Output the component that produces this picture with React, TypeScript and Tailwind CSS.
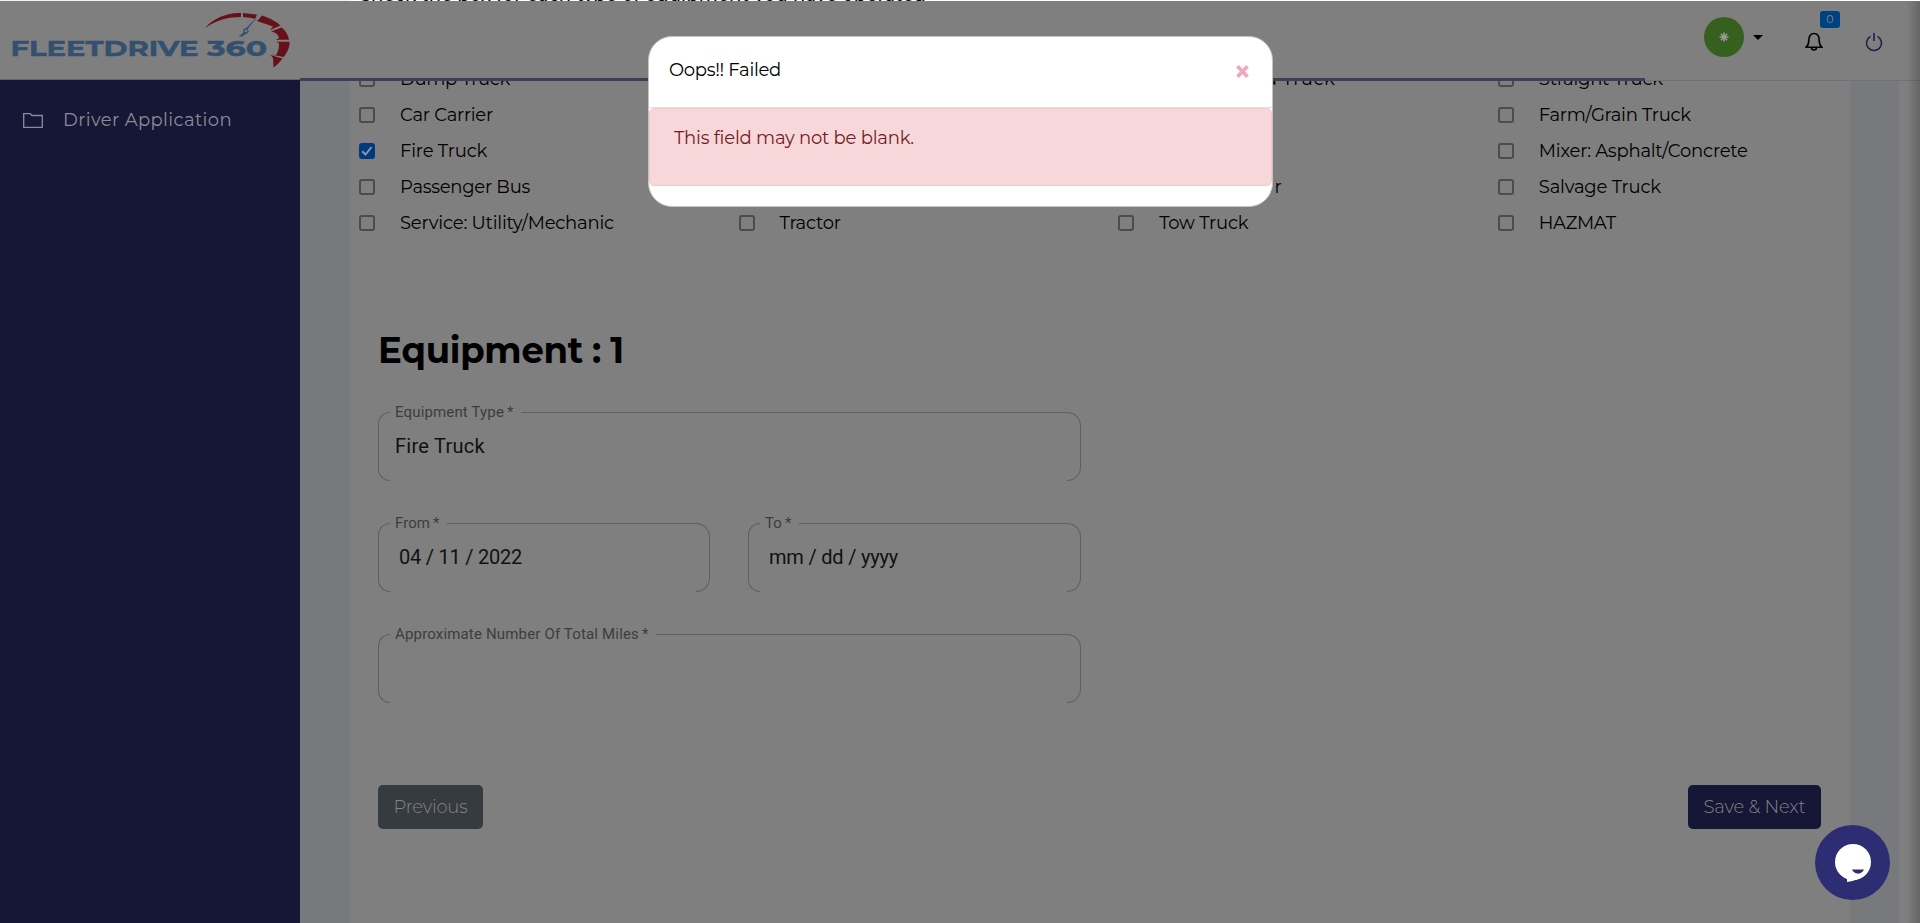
import React from "react";

const FONT = "font-['Montserrat','Inter','Liberation_Sans',sans-serif]";

function T({ w, className = "", children }: { w: number; className?: string; children: string }) {
  const ref = React.useRef<HTMLSpanElement>(null);
  const [ls, setLs] = React.useState(0);
  React.useLayoutEffect(() => {
    const el = ref.current;
    if (el) setLs((w - el.getBoundingClientRect().width) / children.length);
  }, []);
  return (
    <span ref={ref} className={`inline-block whitespace-nowrap ${className}`} style={{ letterSpacing: ls }}>
      {children}
    </span>
  );
}

type Item = { label: string; w: number; checked?: boolean };

const ROWS: Item[][] = [
  [{ label: "Dump Truck", w: 110 }, { label: "Flatbed Truck", w: 120 }, { label: "Refrigerated Truck", w: 176 }, { label: "Straight Truck", w: 124 }],
  [{ label: "Car Carrier", w: 93 }, { label: "Crane", w: 52 }, { label: "Box Truck", w: 86 }, { label: "Farm/Grain Truck", w: 152 }],
  [{ label: "Fire Truck", w: 87, checked: true }, { label: "Garbage", w: 80 }, { label: "Heavy Haul", w: 98 }, { label: "Mixer: Asphalt/Concrete", w: 209 }],
  [{ label: "Passenger Bus", w: 130 }, { label: "Pickup Truck", w: 110 }, { label: "Semi Trailer", w: 124 }, { label: "Salvage Truck", w: 122 }],
  [{ label: "Service: Utility/Mechanic", w: 214 }, { label: "Tractor", w: 61 }, { label: "Tow Truck", w: 89 }, { label: "HAZMAT", w: 77 }],
];

function Check({ checked }: { checked?: boolean }) {
  return (
    <span className={`flex size-4 shrink-0 items-center justify-center rounded-[3px] ${checked ? "bg-[#003980]" : "border-2 border-[#4b4b50]"}`}>
      {checked && (
        <svg viewBox="0 0 16 16" className="size-4" fill="none" stroke="#8f959d" strokeWidth="2">
          <path d="M3.200 8.300 6.500 11.500 12.500 4" />
        </svg>
      )}
    </span>
  );
}

function Field({ label, lw, children }: { label: string; lw: number; children?: React.ReactNode }) {
  return (
    <div className="relative h-[69px] font-[Roboto,sans-serif]">
      <div className="flex h-full">
        <div className="w-3 rounded-l-[15px] border border-r-0 border-[#5f5f5f]" />
        <div style={{ width: lw + 22 }} />
        <div className="flex-1 border-t border-[#5f5f5f]" />
        <div className="w-[14px] rounded-r-[15px] border border-l-0 border-[#5f5f5f]" />
      </div>
      <div className="absolute left-[17px] top-[-10px] flex gap-[3px] text-[15px] leading-5 text-[#3d3d3d]">
        <T w={lw}>{label}</T>
        <span>*</span>
      </div>
      <div className="absolute left-[17px] top-[21px] text-[20px] leading-[26px] text-[#111]">{children}</div>
    </div>
  );
}

function Logo() {
  return (
    <svg className="h-[78px] w-[300px]" viewBox="0 1 300 78">
      <g className="font-['Montserrat',sans-serif]" fontWeight="700" fontSize="22.500" fill="#33506f" stroke="#33506f" strokeWidth=".5">
        <text x="10.500" y="56" textLength="188" lengthAdjust="spacingAndGlyphs">FLEETDRIVE</text>
        <text x="207" y="56" textLength="60" lengthAdjust="spacingAndGlyphs">360</text>
      </g>
      <path d="M205 28C214 17 230 12 241 13V17C229 17 216 20 205 28ZM243 13L257 14.500 255 19 252 18 243 17ZM262 15.500C270 18 277 22 280.500 25.500L270 30 273 26.500 257 21 259 19ZM281.500 27.500C286 31 288.500 36 289 39.700H276L279 38C278 34 275 32 271 31.500ZM289.500 41.700C290 47 287 53 283.500 57L271 54.500 276 55C279 51 279 46 279 43L276 41.700ZM282.500 58.500C281 61 277 65 273.500 67.500L273 58 270.500 55Z" fill="#66101a" />
      <path d="M259 15 247.500 29 249 32 246 34 242 36.500 238.500 36.500 243 33 243.500 29 246 28Z" fill="#33506f" />
      <circle cx="246" cy="31" r="1.300" fill="#7f7f7f" />
    </svg>
  );
}

export default function App() {
  return (
    <div className={`relative flex h-[923px] w-[1920px] flex-col overflow-hidden bg-[#7f7f7f] text-black ${FONT}`}>
      <div className="flex h-px shrink-0 overflow-hidden bg-white">
        <div className="w-[350px] bg-[#f0f4f8]" />
        <div className="h-px overflow-hidden pl-2 text-[18px] font-medium leading-[18px]">
          <span className="-mt-[14px] block"><T w={568}>Check the box for each type of equipment you have operated</T></span>
        </div>
      </div>
      <header className="flex h-[77px] shrink-0 items-start">
        <Logo />
        <div className="flex-1" />
        <div className="flex pr-[37px]">
          <div className="mt-4 flex size-10 items-center justify-center rounded-full bg-[#37601f]">
            <svg viewBox="0 0 10 10" className="size-[10px]" stroke="#9a9a9a" strokeWidth="1.500">
              <path d="M5 .5v9M.5 5h9M1.800 1.800l6.400 6.400M8.200 1.800 1.800 8.200" />
            </svg>
          </div>
          <svg className="ml-[9px] mt-[34px] h-[5px] w-[10px]" viewBox="0 0 10 5"><path d="M0 0h10L5 5Z" /></svg>
          <div className="relative ml-[42px] mt-[31px]">
            <svg className="h-[20px] w-[18px]" viewBox="0 0 18 20" fill="none" stroke="#000" strokeWidth="1.600">
              <path d="M1.200 15.200h15.600c-2.300-2-2.600-3.700-2.600-7C14.200 4 12 1.500 9 1.500S3.800 4 3.800 8.200c0 3.300-.3 5-2.600 7ZM6.500 15.500a2.500 2.500 0 0 0 5 0" />
            </svg>
            <div className="absolute left-[15px] top-[-21px] flex h-[17px] w-5 items-center justify-center rounded-[3px] bg-[#004180] text-[11px] text-[#888]">0</div>
          </div>
          <svg className="ml-[42px] mt-[32px] h-[19px] w-[18px]" viewBox="0 0 18 19" fill="none" stroke="#20204a" strokeWidth="1.600">
            <path d="M9 0v8M5.500 3.400A7.500 7.500 0 1 0 12.500 3.400" />
          </svg>
        </div>
      </header>
      <div className="flex min-h-0 flex-1">
        <aside className="mt-px w-[300px] shrink-0 border-t border-[#666] bg-[#161636] pl-[23px] pt-[26px] text-[#8b8b93]">
          <div className="flex h-7 items-center">
            <svg className="h-[15px] w-5" viewBox="0 0 20 15" fill="none" stroke="currentColor" strokeWidth="1.300">
              <path d="M.7.7h6.600l1.600 1.800h10.400v11.800H.7Z" />
            </svg>
            <T w={169} className="ml-5 text-[18px] leading-7">Driver Application</T>
          </div>
        </aside>
        <div className="flex min-w-0 flex-1 flex-col">
          <div className="flex h-[3px] shrink-0">
            <div className="w-[1345px] bg-[#3f3e59]" />
            <div className="mt-[2px] h-px flex-1 bg-[#6e7278]" />
          </div>
          <div className="flex min-h-0 flex-1">
            <div className="w-[50px] shrink-0 bg-[#77797c]" />
            <main className="flex w-[1500px] shrink-0 flex-col overflow-hidden">
              <div className="-mt-[20.400px] ml-[9px] flex shrink-0 flex-col">
                {ROWS.map((row, i) => (
                  <div key={i} className="flex h-[36.200px] items-center">
                    {row.map((it) => (
                      <label key={it.label} className="flex w-[379.600px] shrink-0 items-center text-[18px] leading-6">
                        <Check checked={it.checked} />
                        <T w={it.w} className="ml-[25px]">{it.label}</T>
                      </label>
                    ))}
                  </div>
                ))}
              </div>
              <div className="pl-7 pr-[29px]">
                <h1 className="mt-[85px] flex text-[35.500px] font-bold leading-[48px]">
                  <T w={205}>Equipment</T>
                  <span className="ml-[9px]">:</span>
                  <span className="ml-[9px]">1</span>
                </h1>
                <div className="mt-[37.500px] flex w-[703px] flex-col gap-[42px]">
                  <Field label="Equipment Type" lw={109}><T w={90}>Fire Truck</T></Field>
                  <div className="grid grid-cols-[332px_333px] gap-[38px]">
                    <Field label="From" lw={35}><span className="ml-1"><T w={123}>04 / 11 / 2022</T></span></Field>
                    <Field label="To" lw={17}><span className="ml-1"><T w={129}>mm / dd / yyyy</T></span></Field>
                  </div>
                  <Field label="Approximate Number Of Total Miles" lw={244} />
                </div>
                <div className="mt-[82px] flex justify-between text-[18px] font-light text-[#858585]">
                  <button className="h-11 w-[105px] rounded-[5px] bg-[#363b3f]"><T w={74}>Previous</T></button>
                  <button className="h-11 w-[133px] rounded-[5px] bg-[#161636]"><T w={102}>{"Save & Next"}</T></button>
                </div>
              </div>
            </main>
            <div className="w-[49px] shrink-0 bg-[#77797c]" />
          </div>
        </div>
      </div>
      <div className="absolute right-0 top-px h-full w-[14px] bg-gradient-to-r from-transparent to-black/20" />
      <div className="absolute left-[648px] top-9 flex h-[171px] w-[625px] flex-col overflow-hidden rounded-[24px] border border-[#c4c4c4] bg-white">
        <div className="flex h-[71px] shrink-0 items-center justify-between border-b border-[#dee2e6] pl-5 pr-[23px]">
          <T w={112} className="-mt-[3px] text-[18px]">Oops!! Failed</T>
          <svg className="-mt-[2px] h-[13px] w-[13px]" viewBox="0 0 13 13" stroke="#f0a8be" strokeWidth="3.800"><path d="M1.500 1.300 11.500 11.700M11.500 1.300 1.500 11.700" /></svg>
        </div>
        <div className="h-[78px] rounded-[5px] border border-[#f5c6cb] bg-[#f8d7da] pl-6 pt-4 text-[18px] leading-[26px] text-[#721c24]">
          <T w={240}>This field may not be blank.</T>
        </div>
      </div>
      <div className="absolute left-[1815px] top-[825px] flex size-[75px] items-center justify-center rounded-full bg-[#2d2d73]">
        <svg className="size-[38px]" viewBox="0 0 38 38">
          <circle cx="19" cy="18" r="18" fill="#fff" />
          <path d="M13 32V38C20 37 29 34 33 29Z" fill="#fff" />
          <path d="M18 25.500H30C28 31 20 31 18 25.500Z" fill="#2d2d73" />
        </svg>
      </div>
    </div>
  );
}
